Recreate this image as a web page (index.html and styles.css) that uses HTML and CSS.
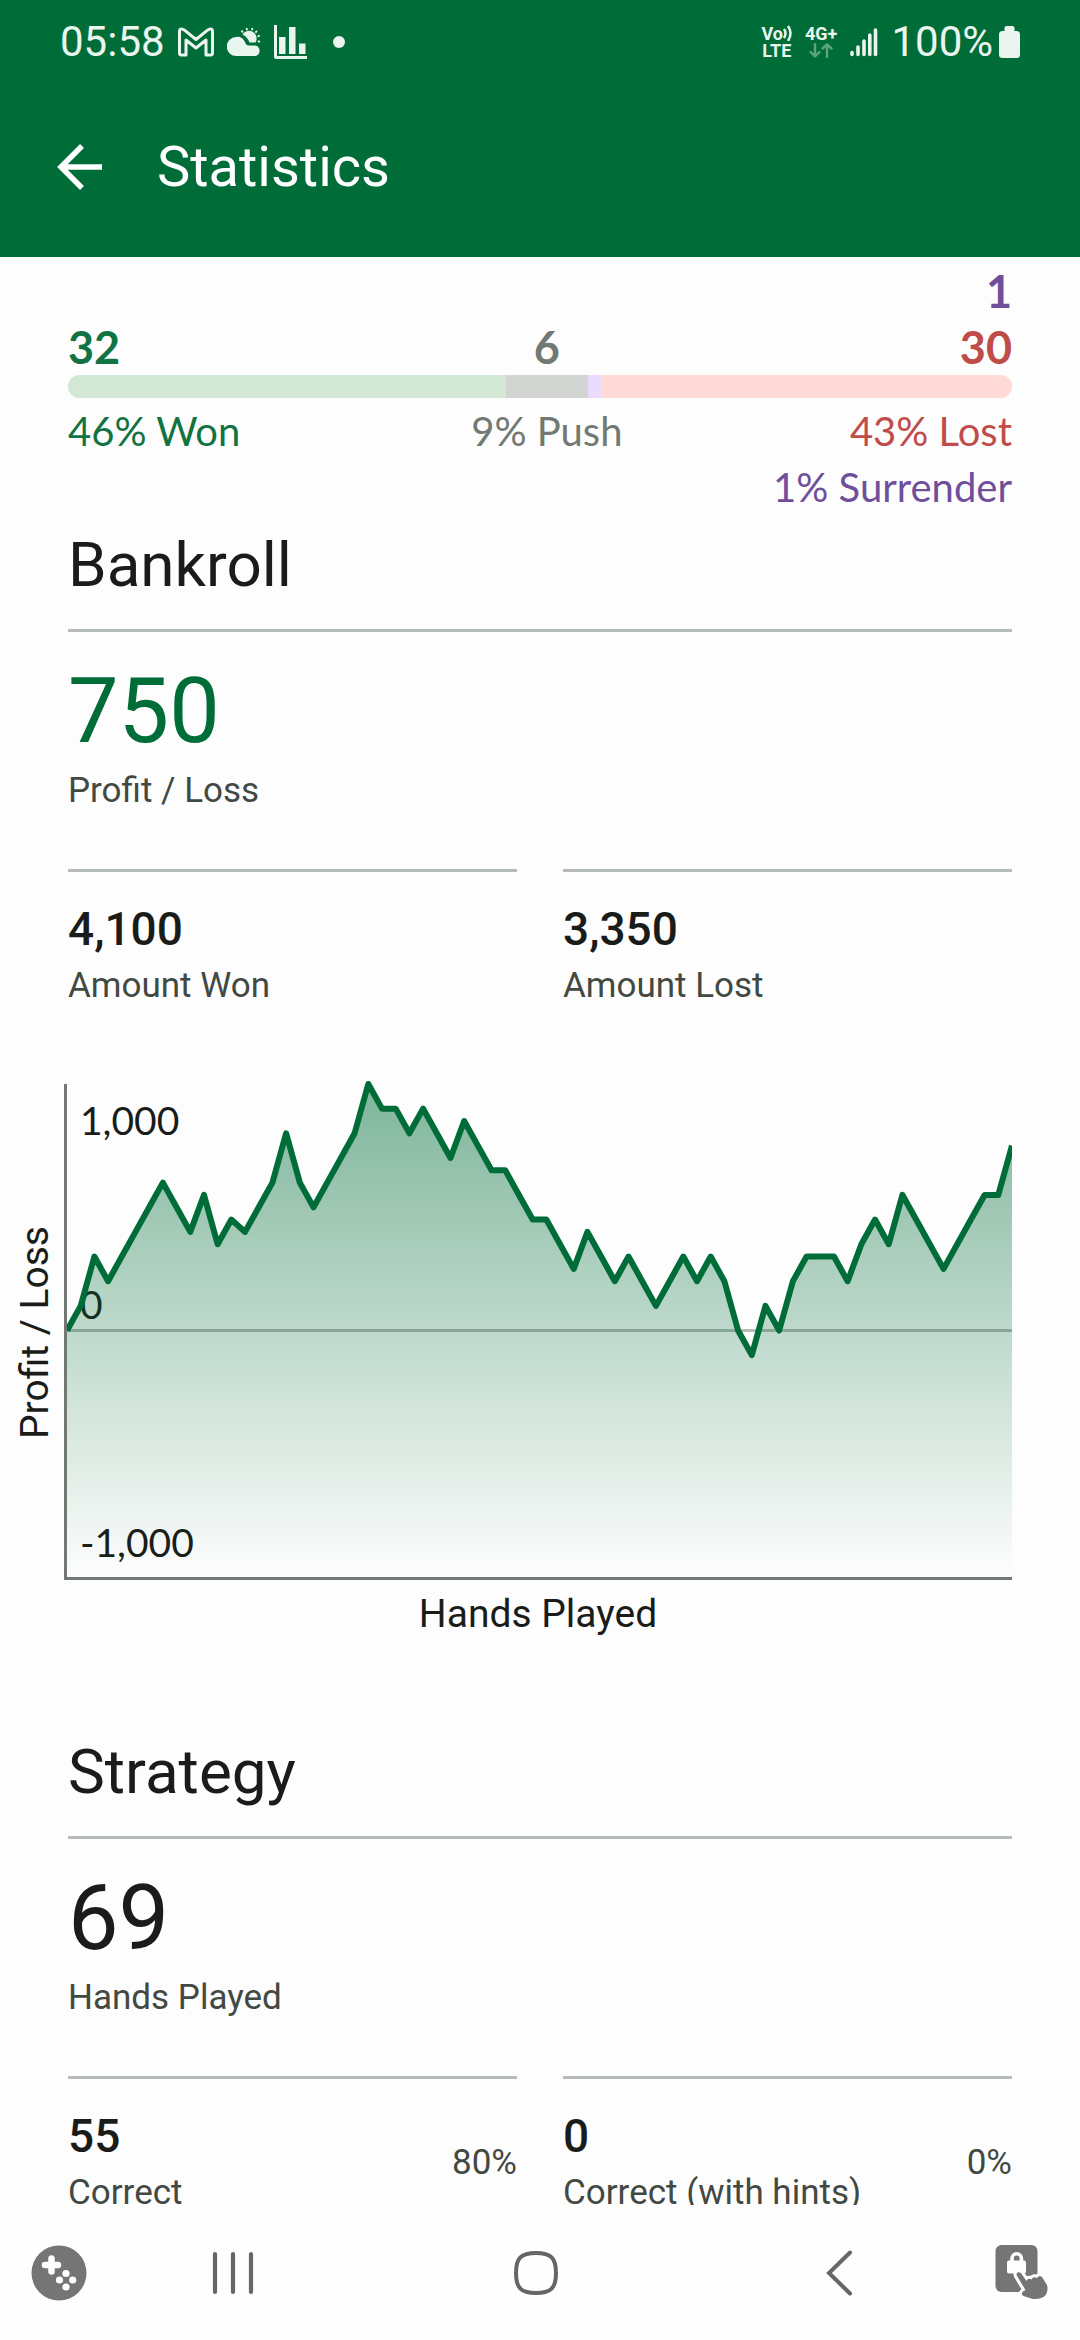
FILE: index.html
```html
<!DOCTYPE html>
<html lang="en">
<head>
    <meta charset="UTF-8">
    <meta name="viewport" content="width=device-width, initial-scale=1">
    <title>Statistics</title>
    <link rel="stylesheet" href="styles.css">
</head>
<body>
<header class="header">
    <div class="status-bar">
        <div class="status-left">
            <span class="clock">05:58</span>
            <svg width="36" height="30" viewBox="0 0 36 30" fill="none" stroke="currentColor" stroke-width="3" stroke-linejoin="round">
                <path d="M3.5 2 Q1.5 2 1.5 4.5 V26 Q1.5 28 3.5 28 H8 V13 L18 21 L28 13 V28 H32.5 Q34.5 28 34.5 26 V4.5 Q34.5 2 32.5 2 Q31 2 29.5 3.2 L18 12.500 L6.5 3.2 Q5 2 3.5 2 Z"/>
            </svg>
            <svg width="34" height="30" viewBox="0 0 34 30" fill="currentColor">
                <path d="M9.5 29 A9.5 9.5 0 0 1 9 10 Q15 9 18 15 Q19 18.5 22 18.5 H28 A5.3 5.3 0 0 1 28 29 Z"/>
                <path d="M15.5 7.5 A7.5 7.5 0 1 1 28.5 15.5 H22.5 Q20.500 10 15.5 7.5 Z"/>
                <path d="M14.5 3.5 l1.5 2 M19.5 1 l.6 2.2 M25.5 1 l-.6 2.2 M30 4 l-1.7 1.6 M32.8 8.6 l-2.2 .7 M33 14.8 l-2.2 -.6" stroke="currentColor" stroke-width="1.8"/>
            </svg>
            <svg width="33" height="34" viewBox="0 0 33 34" fill="currentColor">
                <path d="M0 0 H3 V31 H33 V34 H2.5 Q0 34 0 31.5 Z"/>
                <path d="M5 12 h6.5 v17 h-6.5 Z M15 2 h6.5 v27 h-6.5 Z M25 18.5 h6.5 v10.5 h-6.5 Z"/>
            </svg>
            <span class="dot"></span>
        </div>
        <div class="status-right">
            <span class="network">
                <span class="network-top">Vo<svg width="9" height="16" viewBox="0 0 9 16" fill="none" stroke="currentColor" stroke-width="2.5"><path d="M1 4 Q4 8 1 13 M5 1 Q10 8 5 16"/></svg></span>
                <span>LTE</span>
            </span>
            <span class="network">
                <span>4G+</span>
                <svg class="arrows" width="24" height="15" viewBox="0 0 24 15" fill="none" stroke="currentColor" stroke-width="2.4" stroke-linecap="round" stroke-linejoin="round"><path d="M6 1 V13 M1.5 9 L6 13.5 L10.5 9 M18 14 V2 M13.5 5.5 L18 1.5 L22.5 5.5"/></svg>
            </span>
            <svg width="28" height="30" viewBox="0 0 28 30" stroke="currentColor" stroke-width="3.6" stroke-linecap="round">
                <path d="M2 25.5 V27.5 M8 20 V27.5 M14 14 V27.5 M19.8 8 V27.5 M25.5 3 V27.5"/>
            </svg>
            <span class="battery">
                <span class="clock">100%</span>
                <svg width="21" height="32" viewBox="0 0 21 32" fill="currentColor">
                    <path d="M5.5 5 V2 Q5.5 0 7.5 0 H13.5 Q15.5 0 15.5 2 V5 H17.5 Q21 5 21 8.5 V28.5 Q21 32 17.5 32 H3.5 Q0 32 0 28.5 V8.5 Q0 5 3.5 5 Z"/>
                </svg>
            </span>
        </div>
    </div>
    <div class="app-bar">
        <button class="icon-button back" type="button" aria-label="Back">
            <svg width="46" height="46" viewBox="0 0 46 46" fill="none" stroke="currentColor" stroke-width="5.5">
                <path d="M45 23 H5 M25 2 L4 23 L25 44"/>
            </svg>
        </button>
        <h1>Statistics</h1>
    </div>
</header>

<main class="content">
    <section class="outcomes">
        <!-- flex-grow is the number of hands, so labels line up with the bar -->
        <div class="outcome-row counts">
            <span class="won" style="flex-grow: 32">32</span>
            <span class="push" style="flex-grow: 6">6</span>
            <span class="lost" style="flex-grow: 31"><span class="surrender">1</span>30</span>
        </div>
        <div class="outcome-bar">
            <div class="bar-won" style="flex-grow: 32"></div>
            <div class="bar-push" style="flex-grow: 6"></div>
            <div class="bar-surrender" style="flex-grow: 1"></div>
            <div class="bar-lost" style="flex-grow: 30"></div>
        </div>
        <div class="outcome-row percents">
            <span class="won" style="flex-grow: 32">46% Won</span>
            <span class="push" style="flex-grow: 6">9% Push</span>
            <span class="lost" style="flex-grow: 31">43% Lost<span class="surrender">1% Surrender</span></span>
        </div>
    </section>

    <section class="stats">
        <h2>Bankroll</h2>
        <div class="total">
            <div class="total-value profit">750</div>
            <div class="label">Profit / Loss</div>
        </div>
        <div class="cells">
            <div class="cell">
                <div>
                    <div class="value">4,100</div>
                    <div class="label">Amount Won</div>
                </div>
            </div>
            <div class="cell">
                <div>
                    <div class="value">3,350</div>
                    <div class="label">Amount Lost</div>
                </div>
            </div>
        </div>
    </section>

    <section class="chart">
        <div class="y-title"><span>Profit / Loss</span></div>
        <div class="plot">
            <span class="tick tick-top">1,000</span>
            <span class="tick tick-zero">0</span>
            <span class="tick tick-bottom">-1,000</span>
            <!-- x: hand number, y: one unit is 50 chips -->
            <svg class="graph" viewBox="0 0 69 40" preserveAspectRatio="none">
                <defs>
                    <linearGradient id="fade" gradientUnits="userSpaceOnUse" x1="0" y1="0" x2="0" y2="40">
                        <stop offset="0" stop-color="#006d38" stop-opacity="0.5"/>
                        <stop offset="1" stop-color="#006d38" stop-opacity="0"/>
                    </linearGradient>
                </defs>
                <line class="zero-line" x1="0" y1="20" x2="69" y2="20"/>
                <polygon fill="url(#fade)" points="0,40 0,20 1,18 2,14 3,16 4,14 5,12 6,10 7,8 8,10 9,12 10,9 11,13 12,11 13,12 14,10 15,8 16,4 17,8 18,10 19,8 20,6 21,4 22,0 23,2 24,2 25,4 26,2 27,4 28,6 29,3 30,5 31,7 32,7 33,9 34,11 35,11 36,13 37,15 38,12 39,14 40,16 41,14 42,16 43,18 44,16 45,14 46,16 47,14 48,16 49,20 50,22 51,18 52,20 53,16 54,14 55,14 56,14 57,16 58,13 59,11 60,13 61,9 62,11 63,13 64,15 65,13 66,11 67,9 68,9 69,5 69,40"/>
                <polyline class="profit-line" points="0,20 1,18 2,14 3,16 4,14 5,12 6,10 7,8 8,10 9,12 10,9 11,13 12,11 13,12 14,10 15,8 16,4 17,8 18,10 19,8 20,6 21,4 22,0 23,2 24,2 25,4 26,2 27,4 28,6 29,3 30,5 31,7 32,7 33,9 34,11 35,11 36,13 37,15 38,12 39,14 40,16 41,14 42,16 43,18 44,16 45,14 46,16 47,14 48,16 49,20 50,22 51,18 52,20 53,16 54,14 55,14 56,14 57,16 58,13 59,11 60,13 61,9 62,11 63,13 64,15 65,13 66,11 67,9 68,9 69,5"/>
            </svg>
        </div>
        <div class="x-title">Hands Played</div>
    </section>

    <section class="stats">
        <h2>Strategy</h2>
        <div class="total">
            <div class="total-value">69</div>
            <div class="label">Hands Played</div>
        </div>
        <div class="cells">
            <div class="cell">
                <div>
                    <div class="value">55</div>
                    <div class="label">Correct</div>
                </div>
                <div class="label">80%</div>
            </div>
            <div class="cell">
                <div>
                    <div class="value">0</div>
                    <div class="label">Correct (with hints)</div>
                </div>
                <div class="label">0%</div>
            </div>
        </div>
    </section>
</main>

<nav class="nav-bar">
    <button class="icon-button" type="button" aria-label="Game tools">
        <svg width="56" height="56" viewBox="0 0 56 56">
            <circle cx="28" cy="28" r="27.5" fill="#757575"/>
            <path d="M20.5 13.5 V26.5 M14 20 H27" stroke="#fff" stroke-width="6.5" stroke-linecap="round"/>
            <g fill="#fff">
                <circle cx="35" cy="28.5" r="3.6"/>
                <circle cx="28.5" cy="35" r="3.6"/>
                <circle cx="41.7" cy="35" r="3.6"/>
                <circle cx="35" cy="42" r="3.6"/>
            </g>
        </svg>
    </button>
    <div class="nav-main">
        <button class="icon-button" type="button" aria-label="Recent apps">
            <svg width="44" height="46" viewBox="0 0 44 46" stroke="#666" stroke-width="4.2" stroke-linecap="round">
                <path d="M4 4 V42 M22 4 V42 M40 4 V42"/>
            </svg>
        </button>
        <button class="icon-button" type="button" aria-label="Home">
            <svg width="44" height="46" viewBox="0 0 44 46" fill="none" stroke="#666" stroke-width="4">
                <path d="M22 3 C37 3 42 8 42 23 C42 38 37 43 22 43 C7 43 2 38 2 23 C2 8 7 3 22 3 Z"/>
            </svg>
        </button>
        <button class="icon-button" type="button" aria-label="Back">
            <svg width="44" height="46" viewBox="0 0 44 46" fill="none" stroke="#666" stroke-width="4" stroke-linecap="round">
                <path d="M33 2.5 L12 23 L33 43.5"/>
            </svg>
        </button>
    </div>
    <button class="icon-button" type="button" aria-label="Lock touch">
        <svg width="54" height="58" viewBox="0 0 54 58">
            <rect x="0.5" y="1" width="42" height="47" rx="6" fill="#757575"/>
            <path d="M17 18 V14.5 A4.700 4.700 0 0 1 26.4 14.5 V18" fill="none" stroke="#fff" stroke-width="3.6"/>
            <rect x="12" y="16.5" width="19" height="13" rx="2" fill="#fff"/>
            <path d="M22 32 Q20.5 28.5 23.5 28.2 Q25.5 28 27 30.5 L31.5 37 Q33 33.5 36.5 35.5 Q38 32 42 34 Q44.5 30.5 47 33 L52 41 Q54 49 48.500 53 Q43 56 36 54.5 L28.500 52 Q25.500 50 28 47.5 L30.500 46 Z" fill="#757575" stroke="#fff" stroke-width="6" stroke-linejoin="round" paint-order="stroke"/>
        </svg>
    </button>
</nav>
</body>
</html>
```
FILE: styles.css
```css
* {
    box-sizing: border-box;
}

body {
    margin: 0;
    height: 100vh;
    display: flex;
    flex-direction: column;
    background: #fdfdfd;
    color: #1a1c1a;
    font-family: Roboto, "Liberation Sans", sans-serif;
}

svg {
    display: block;
    flex-shrink: 0;
}

h1, h2 {
    margin: 0;
    font-weight: 400;
}

.icon-button {
    padding: 0;
    border: none;
    background: none;
    color: inherit;
    cursor: pointer;
}

/* header */

.header {
    flex-shrink: 0;
    padding-bottom: 8px;
    background: #006d38;
    color: #fff;
}

.status-bar {
    display: flex;
    justify-content: space-between;
    align-items: center;
    height: 84px;
    padding: 0 60px;
    color: #e9f5ee;
}

.status-left,
.status-right,
.battery {
    display: flex;
    align-items: center;
}

.status-left {
    gap: 13px;
}

.status-right {
    gap: 13px;
}

.battery {
    gap: 6px;
}

.clock {
    font-size: 42px;
    line-height: 48px;
}

.dot {
    width: 12px;
    height: 12px;
    margin-left: 13px;
    border-radius: 50%;
    background: currentColor;
}

.network {
    display: flex;
    flex-direction: column;
    align-items: center;
    font-size: 18px;
    font-weight: 700;
    line-height: 17px;
}

.network-top {
    display: flex;
}

.arrows {
    margin: 1px 0;
    opacity: 0.4;
}

.app-bar {
    display: flex;
    align-items: center;
    gap: 54px;
    height: 165px;
    padding: 0 57px;
}

h1 {
    font-size: 56px;
    line-height: 64px;
}

/* scrolled content */

.content {
    flex: 1;
    min-height: 0;
    overflow: hidden;
}

.outcomes {
    padding: 6px 68px 0;
    font-family: Lato, "Liberation Sans", sans-serif;
    line-height: 56px;
}

.outcome-row {
    display: flex;
    align-items: flex-end;
    white-space: nowrap;
}

.outcome-row > span {
    display: flex;
    flex-direction: column;
    flex-basis: 0;
    min-width: 0;
}

.counts {
    font-size: 45px;
    font-weight: 700;
}

.percents {
    align-items: flex-start;
    padding-top: 5px;
    font-size: 40px;
}

.won {
    color: #127342;
}

.push {
    align-items: center;
    color: #727972;
}

.lost {
    align-items: flex-end;
    color: #c04c4a;
}

.surrender {
    color: #6f4f9c;
}

.outcome-bar {
    display: flex;
    height: 23px;
    border-radius: 12px;
    overflow: hidden;
}

.bar-won {
    background: #d2e8d4;
}

.bar-push {
    background: #d3d5d2;
}

.bar-surrender {
    background: #ebdbff;
}

.bar-lost {
    background: #ffdad7;
}

.stats {
    padding: 0 68px;
}

h2 {
    padding: 14px 0 28px;
    border-bottom: 3px solid #b5bbb5;
    font-size: 62px;
    line-height: 72px;
}

.total {
    padding: 25px 0 55px;
}

.total-value {
    font-size: 90px;
    line-height: 110px;
}

.profit {
    color: #006d38;
}

.label {
    color: #424942;
    font-size: 35px;
    line-height: 47px;
}

.cells {
    display: grid;
    grid-template-columns: 1fr 1fr;
    gap: 46px;
}

.cell {
    display: flex;
    justify-content: space-between;
    align-items: center;
    padding-top: 30px;
    border-top: 3px solid #b5bbb5;
}

.value {
    padding-bottom: 6px;
    font-size: 46px;
    font-weight: 500;
    line-height: 54px;
}

/* chart */

.chart {
    display: grid;
    grid-template-columns: 64px 1fr;
    padding: 75px 68px 85px 0;
    font-size: 39px;
    line-height: 46px;
}

.y-title {
    display: flex;
    align-items: center;
    justify-content: center;
    padding-left: 6px;
}

.y-title span {
    writing-mode: vertical-rl;
    transform: rotate(180deg);
}

.plot {
    position: relative;
    height: 496px;
    border-left: 3px solid #727972;
    border-bottom: 3px solid #727972;
}

.tick {
    position: absolute;
    left: 13px;
    font-family: Lato, "Liberation Sans", sans-serif;
}

.tick-top {
    top: 13px;
}

.tick-zero {
    bottom: calc(50% + 4px);
}

.tick-bottom {
    bottom: 12px;
}

.graph {
    position: relative;
    width: 100%;
    height: 100%;
    overflow: visible;
    clip-path: inset(-8px 0 0);
}

.zero-line {
    stroke: #b5bbb5;
    stroke-width: 3px;
    vector-effect: non-scaling-stroke;
}

.profit-line {
    fill: none;
    stroke: #006d38;
    stroke-width: 6px;
    stroke-linejoin: round;
    vector-effect: non-scaling-stroke;
}

.x-title {
    grid-column: 2;
    padding-top: 11px;
    text-align: center;
}

/* system navigation */

.nav-bar {
    display: flex;
    align-items: center;
    flex-shrink: 0;
    height: 135px;
    padding: 0 31px;
    background: #fefefe;
}

.nav-main {
    display: flex;
    flex: 1;
    justify-content: space-between;
    padding: 0 134px 0 124px;
}
```
